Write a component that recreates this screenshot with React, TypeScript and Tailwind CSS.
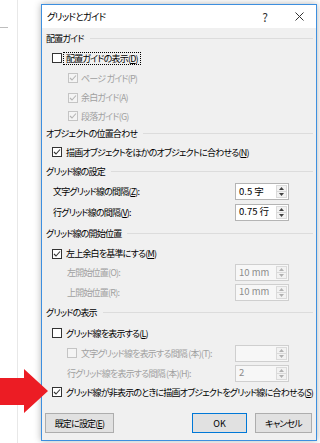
import React from 'react';

type CheckProps = { checked?: boolean; disabled?: boolean };

const Check: React.FC<CheckProps> = ({ checked, disabled }) => (
  <span
    className={`flex h-[10px] w-[10px] shrink-0 items-center justify-center border ${
      disabled ? 'border-[#c4c4c4] bg-[#f4f4f4]' : 'border-[#333333] bg-white'
    }`}
  >
    {checked && (
      <svg width="8" height="8" viewBox="0 0 8 8">
        <path d="M1 4 L3 6 L7 1.5" fill="none" stroke={disabled ? '#b4b4b4' : '#333333'} strokeWidth="1.1" />
      </svg>
    )}
  </span>
);

const Key: React.FC<{ k: string }> = ({ k }) => (
  <>
    (<span className="underline underline-offset-[1px]">{k}</span>)
  </>
);

const Header: React.FC<{ h: string; title: string }> = ({ h, title }) => (
  <div className={`flex items-center ${h}`}>
    <span className="whitespace-nowrap">{title}</span>
    <div className="ml-[6px] h-px flex-1 bg-[#dcdcdc]" />
  </div>
);

const Spinner: React.FC<{ value: string; disabled?: boolean }> = ({ value, disabled }) => (
  <div
    className={`ml-auto mr-[24px] flex h-[17px] w-[54px] shrink-0 border ${
      disabled ? 'border-[#cfcfcf] bg-[#f7f7f7] text-[#8c8c8c]' : 'border-[#b4b4b4] bg-white text-black'
    }`}
  >
    <div className="flex flex-1 items-center pl-[3px] text-[9.5px] tracking-normal">{value}</div>
    <div className="m-[1px] flex w-[11px] flex-col border border-[#dadada] bg-[#f2f2f2]">
      <div className="flex flex-1 items-center justify-center border-b border-[#dadada]">
        <svg width="5" height="3" viewBox="0 0 5 3">
          <path d="M0 3 L2.5 0 L5 3 Z" fill={disabled ? '#b0b0b0' : '#404040'} />
        </svg>
      </div>
      <div className="flex flex-1 items-center justify-center">
        <svg width="5" height="3" viewBox="0 0 5 3">
          <path d="M0 0 L2.5 3 L5 0 Z" fill={disabled ? '#b0b0b0' : '#404040'} />
        </svg>
      </div>
    </div>
  </div>
);

export default function App() {
  const gray = 'text-[#a0a0a0]';
  return (
    <div className="relative h-[443px] w-[320px] overflow-hidden bg-white pl-[41px] pt-[4px] font-['Noto_Sans_CJK_JP',sans-serif] text-[9px] leading-none tracking-[-0.8px] text-black [font-feature-settings:'palt']">
      {/* background window edge */}
      <div className="absolute left-[17px] top-0 h-full w-px bg-[#e8e8e8]" />
      <div className="absolute left-0 top-[27px] h-px w-[8px] bg-[#bdbdbd]" />

      {/* red arrow */}
      <svg className="absolute left-0 top-[369px] z-10" width="50" height="45" viewBox="0 0 50 45">
        <polygon points="0,9 24,9 24,0 48,22 24,44 24,36 0,36" fill="#ec1c24" />
      </svg>

      <div className="relative flex h-[437px] w-[276px] flex-col border border-[#3d8fdf] bg-[#f0f0f0] shadow-[0_0_7px_rgba(0,0,0,0.3)]">
        {/* title bar */}
        <div className="flex h-[23px] items-center bg-white pl-[5px]">
          <span className="text-[9.5px]">グリッドとガイド</span>
          <div className="ml-auto flex h-full">
            <div className="flex w-[34px] items-center justify-center text-[12px] tracking-normal text-[#333]">?</div>
            <div className="flex w-[34px] items-center justify-center">
              <svg width="9" height="9" viewBox="0 0 9 9">
                <path d="M0.5 0.5 L8.5 8.5 M8.5 0.5 L0.5 8.5" stroke="#333" strokeWidth="1" />
              </svg>
            </div>
          </div>
        </div>

        {/* body */}
        <div className="flex flex-col pl-[4px] pr-[3px]">
          <Header h="h-[20px]" title="配置ガイド" />
          <div className="flex h-[20px] items-center pl-[6px]">
            <Check />
            <span className="ml-[1px] whitespace-nowrap border border-dotted border-black px-[2px] py-[1px]">
              配置ガイドの表示<Key k="D" />
            </span>
          </div>
          <div className={`flex h-[20px] items-center gap-[3px] pl-[22px] ${gray}`}>
            <Check checked disabled />
            <span>ページ ガイド(P)</span>
          </div>
          <div className={`flex h-[19px] items-center gap-[3px] pl-[22px] ${gray}`}>
            <Check checked disabled />
            <span>余白ガイド(A)</span>
          </div>
          <div className={`flex h-[18px] items-center gap-[3px] pl-[22px] ${gray}`}>
            <Check checked disabled />
            <span>段落ガイド(G)</span>
          </div>

          <Header h="h-[17px]" title="オブジェクトの位置合わせ" />
          <div className="flex h-[20px] items-center gap-[4px] pl-[6px]">
            <Check checked />
            <span className="whitespace-nowrap">
              描画オブジェクトをほかのオブジェクトに合わせる<Key k="N" />
            </span>
          </div>

          <Header h="h-[19px]" title="グリッド線の設定" />
          <div className="flex h-[21px] items-center pl-[7px]">
            <span className="whitespace-nowrap">
              文字グリッド線の間隔<Key k="Z" />:
            </span>
            <Spinner value="0.5 字" />
          </div>
          <div className="flex h-[20px] items-center pl-[7px]">
            <span className="whitespace-nowrap">
              行グリッド線の間隔<Key k="V" />:
            </span>
            <Spinner value="0.75 行" />
          </div>

          <Header h="h-[22px]" title="グリッド線の開始位置" />
          <div className="flex h-[19px] items-center gap-[4px] pl-[6px]">
            <Check checked />
            <span className="whitespace-nowrap">
              左上余白を基準にする<Key k="M" />
            </span>
          </div>
          <div className={`flex h-[19px] items-center pl-[21px] ${gray}`}>
            <span>左開始位置(O):</span>
            <Spinner value="10 mm" disabled />
          </div>
          <div className={`flex h-[20px] items-center pl-[21px] ${gray}`}>
            <span>上開始位置(R):</span>
            <Spinner value="10 mm" disabled />
          </div>

          <Header h="h-[21px]" title="グリッドの表示" />
          <div className="flex h-[20px] items-center gap-[4px] pl-[6px]">
            <Check />
            <span className="whitespace-nowrap">
              グリッド線を表示する<Key k="L" />
            </span>
          </div>
          <div className={`flex h-[20px] items-center gap-[4px] pl-[21px] ${gray}`}>
            <Check disabled />
            <span className="whitespace-nowrap">文字グリッド線を表示する間隔 (本)(T):</span>
            <Spinner value="" disabled />
          </div>
          <div className={`flex h-[20px] items-center pl-[21px] ${gray}`}>
            <span className="whitespace-nowrap">行グリッド線を表示する間隔 (本)(H):</span>
            <Spinner value="2" disabled />
          </div>
          <div className="flex h-[18px] items-center gap-[4px] pl-[6px]">
            <Check checked />
            <span className="whitespace-nowrap">
              グリッド線が非表示のときに描画オブジェクトをグリッド線に合わせる<Key k="S" />
            </span>
          </div>
        </div>

        {/* buttons */}
        <div className="mt-[12px] flex items-center pl-[3px] pr-[4px]">
          <button className="flex h-[20px] w-[69px] items-center justify-center border border-[#adadad] bg-[#e1e1e1]">
            既定に設定<Key k="E" />
          </button>
          <button className="ml-auto flex h-[20px] w-[55px] items-center justify-center border border-[#0078d7] bg-[#e1e1e1] tracking-normal">
            OK
          </button>
          <button className="ml-[8px] flex h-[20px] w-[57px] items-center justify-center border border-[#adadad] bg-[#e1e1e1]">
            キャンセル
          </button>
        </div>
      </div>
    </div>
  );
}
